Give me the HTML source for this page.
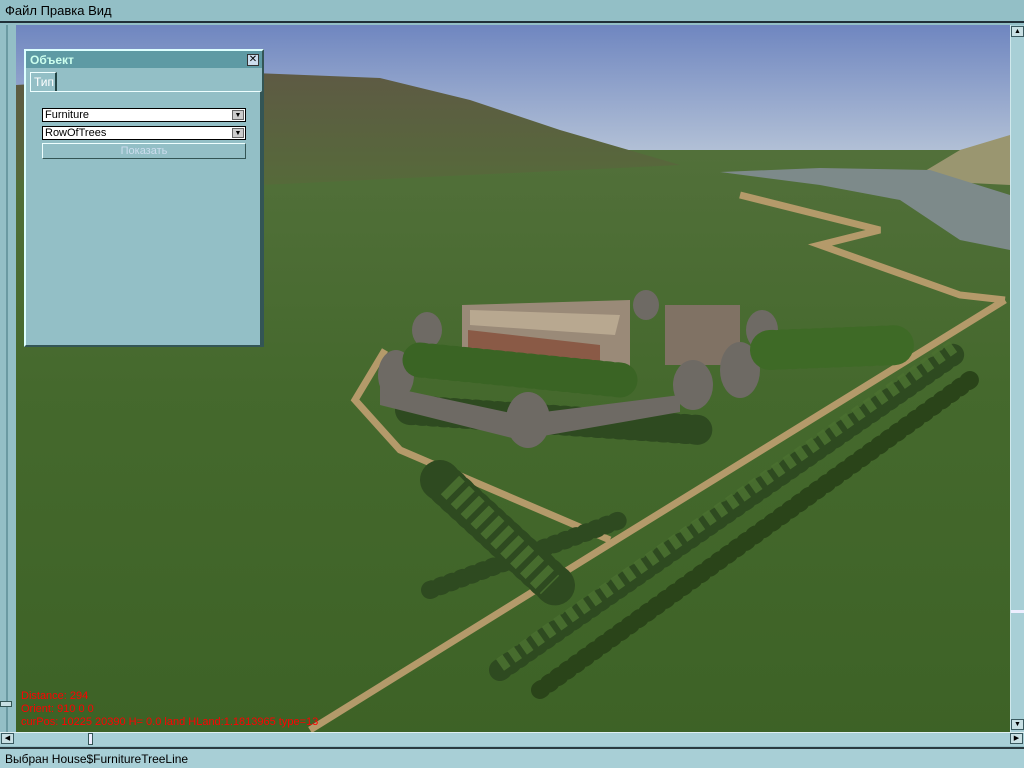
<!DOCTYPE html>
<html><head><meta charset="utf-8"><style>
*{margin:0;padding:0;box-sizing:border-box}
body{width:1024px;height:768px;overflow:hidden;background:#93bfc6;font-family:"Liberation Sans","DejaVu Sans",sans-serif;position:relative}
.menu{position:absolute;left:0;top:0;width:1024px;height:23px;background:#93bfc6;border-bottom:2px solid #203038;font-size:13px;padding:3px 5px;color:#000}
.vp{position:absolute;left:16px;top:25px;width:994px;height:707px;overflow:hidden}
.lscroll{position:absolute;left:0;top:25px;width:16px;height:707px;background:#93bfc6}
.lscroll i{position:absolute;left:6px;top:0;width:2px;height:707px;background:#6a9aa2}
.rscroll{position:absolute;left:1010px;top:25px;width:14px;height:707px;background:#a8cfd6;border-left:1px solid #cfe8ec}
.btn{position:absolute;width:13px;height:11px;background:#c8e0e4;border:1px solid #3a5a60;font-size:7px;line-height:9px;text-align:center}
.hscroll{position:absolute;left:0;top:732px;width:1024px;height:14px;background:#a8cfd6;border-top:1px solid #e0f0f2}
.status{position:absolute;left:0;top:747px;width:1024px;height:21px;background:#a8cfd6;border-top:2px solid #2a3a40;font-size:12px;padding:3px 5px}
.win{position:absolute;left:24px;top:49px;width:240px;height:298px;background:#93bfc6;border:2px solid #dff;border-right-color:#355;border-bottom-color:#355}
.title{height:17px;background:#5e9aa4;color:#cfe;font-size:12px;font-weight:bold;padding:2px 4px}
.x{position:absolute;right:3px;top:3px;width:12px;height:12px;background:#cde;border:1px solid #333;font-size:10px;line-height:10px;text-align:center;font-weight:bold}
.tab{position:absolute;left:4px;top:21px;width:27px;height:20px;border:1px solid #eff;border-bottom:none;border-right:2px solid #244;font-size:12px;padding:2px 3px;color:#fff}
.body{position:absolute;left:4px;top:40px;width:232px;height:254px;border-top:1px solid #eff;border-right:2px solid #355}
.sel{position:absolute;left:16px;width:204px;height:14px;background:#fff;border:1px solid #000;font-size:11px;padding:0 2px;line-height:12px}
.sel b{position:absolute;right:1px;top:1px;width:12px;height:10px;background:#ccc;border:1px solid #666;font-size:7px;text-align:center;line-height:9px}
.show{position:absolute;left:16px;top:92px;width:204px;height:16px;border:1px solid #eff;border-right-color:#355;border-bottom-color:#355;color:#cde;font-size:11px;text-align:center;line-height:14px}
.dbg{position:absolute;left:21px;color:#f00;font-size:11px;line-height:13px}
</style></head><body>
<div class="menu">Файл Правка Вид</div>
<div class="lscroll"><i></i><div style="position:absolute;left:0;top:676px;width:12px;height:6px;background:#c8e0e4;border:1px solid #355"></div></div>
<div class="vp">
<svg width="994" height="707" viewBox="16 25 994 707">
<defs>
<linearGradient id="sky" x1="0" y1="0" x2="0" y2="1"><stop offset="0" stop-color="#6f86c0"/><stop offset="1" stop-color="#c4d0dc"/></linearGradient>
<linearGradient id="gr" x1="0" y1="0" x2="0" y2="1"><stop offset="0" stop-color="#52703a"/><stop offset=".4" stop-color="#45692d"/><stop offset="1" stop-color="#3d6226"/></linearGradient>
<linearGradient id="hill" x1="0" y1="0" x2="0" y2="1"><stop offset="0" stop-color="#5e5a44"/><stop offset="1" stop-color="#566a3a"/></linearGradient>
</defs>
<rect x="16" y="25" width="994" height="160" fill="url(#sky)"/>
<rect x="16" y="150" width="994" height="590" fill="url(#gr)"/>
<path d="M16 85 L230 72 L380 78 L470 100 L560 130 L680 165 L260 185 L16 180Z" fill="url(#hill)"/>
<path d="M910 180 L960 150 L1010 135 L1010 185 Z" fill="#9a9670"/>
<path d="M720 172 L820 168 L930 170 L1010 195 L1010 250 L960 240 L900 200 L820 185 Z" fill="#7d8a8a"/>
<g fill="none" stroke="#b49a6a" stroke-width="7">
<path d="M310 730 L600 550 L1005 300"/>
<path d="M385 350 L355 400 L400 450 L610 540"/>
<path d="M740 195 L880 230 L820 245 L960 295 L1005 300"/>
</g>
<g fill="none" stroke-linecap="round" stroke-dasharray="2 9">
<path d="M500 670 L960 350" stroke="#2e4a20" stroke-width="22"/>
<path d="M540 690 L970 380" stroke="#2a4419" stroke-width="18"/>
<path d="M440 480 L560 590" stroke="#2e4a20" stroke-width="40"/>
<path d="M430 590 L620 520" stroke="#2e4a20" stroke-width="18"/>
<path d="M410 410 L700 430" stroke="#2e4a20" stroke-width="30"/>
</g>
<g fill="#4a6e30" opacity=".9">
<path d="M500 665 L955 345" stroke="#4a7030" stroke-width="14" stroke-dasharray="8 6" fill="none"/>
<path d="M450 485 L550 585" stroke="#4a7030" stroke-width="26" stroke-dasharray="8 6" fill="none"/>
</g>
<g fill="#9a8a78"><path d="M462 305 L630 300 L630 375 L462 360Z"/></g>
<path d="M470 310 L620 315 L615 335 L470 325Z" fill="#b8a890"/>
<path d="M468 330 L600 345 L600 375 L468 360Z" fill="#8a5a46"/>
<rect x="665" y="305" width="75" height="60" fill="#807264"/>
<g fill="#6e6a64">
<path d="M380 385 L520 415 L680 395 L680 412 L520 440 L380 405Z"/>
<ellipse cx="396" cy="375" rx="18" ry="25"/><ellipse cx="528" cy="420" rx="22" ry="28"/>
<ellipse cx="693" cy="385" rx="20" ry="25"/><ellipse cx="740" cy="370" rx="20" ry="28"/>
<ellipse cx="762" cy="330" rx="16" ry="20"/><ellipse cx="427" cy="330" rx="15" ry="18"/><ellipse cx="646" cy="305" rx="13" ry="15"/>
</g>
<g fill="none" stroke-linecap="round" stroke-dasharray="3 8">
<path d="M420 360 L620 380" stroke="#3a6424" stroke-width="35"/>
<path d="M770 350 L900 345" stroke="#3e6a26" stroke-width="40"/>
</g>
</svg>
</div>
<div class="rscroll"><div class="btn" style="left:0;top:1px">▲</div><div style="position:absolute;left:0;top:585px;width:13px;height:3px;background:#eef"></div><div class="btn" style="left:0;top:694px">▼</div></div>
<div class="hscroll"><div class="btn" style="left:1px;top:0">◀</div><div style="position:absolute;left:88px;top:0;width:5px;height:12px;background:#eef;border:1px solid #355"></div><div class="btn" style="left:1010px;top:0">▶</div></div>
<div class="status">Выбран House$FurnitureTreeLine</div>
<div class="dbg" style="top:690px">Distance: 294</div>
<div class="dbg" style="top:703px">Orient: 910 0 0</div>
<div class="dbg" style="top:716px">curPos: 10225 20390 H= 0.0 land HLand:1.1813965 type=13</div>
<div class="win">
<div class="title">Объект</div><div class="x">✕</div>
<div class="tab">Тип</div>
<div class="body"></div>
<div class="sel" style="top:57px">Furniture<b>▼</b></div>
<div class="sel" style="top:75px">RowOfTrees<b>▼</b></div>
<div class="show">Показать</div>
</div>
</body></html>
